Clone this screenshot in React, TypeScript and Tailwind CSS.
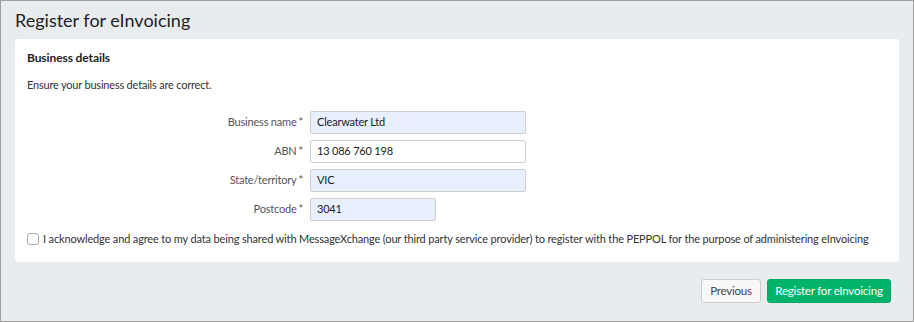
import React from "react";

const font = { fontFamily: 'Lato, "Noto Sans", sans-serif' };

function Row({ label, value, w, filled }: { label: string; value: string; w: string; filled: boolean }) {
  return (
    <div className="flex items-center h-[23px]">
      <div className="w-[283px] pr-[7px] text-right text-[11px] tracking-[-0.2px] text-[#555]">
        {label}
        <span className="ml-[2px]">*</span>
      </div>
      <div
        className={`${w} h-[23px] border border-[#cfcfcf] rounded-[2px] flex items-center pl-[6px] text-[11px] tracking-[-0.2px] text-[#222] ${
          filled ? "bg-[#e8f0fe]" : "bg-white"
        }`}
      >
        {value}
      </div>
    </div>
  );
}

export default function App() {
  return (
    <div
      className="w-[914px] h-[322px] border border-[#a0a0a0] bg-[#e9ecef] flex flex-col overflow-hidden"
      style={font}
    >
      <div className="h-[38px] pl-[14px] pt-[7px] text-[18px] text-[#222] leading-[24px]">Register for eInvoicing</div>
      <div className="mx-[14px] bg-white rounded-[3px] px-[12px] pt-[10px] h-[223px]">
        <div className="text-[12px] font-bold tracking-[-0.1px] text-[#222] leading-[18px]">Business details</div>
        <div className="mt-[9px] text-[11px] tracking-[-0.2px] text-[#333] leading-[18px]">
          Ensure your business details are correct.
        </div>
        <div className="mt-[17px] flex flex-col gap-[6px]">
          <Row label="Business name" value="Clearwater Ltd" w="w-[216px]" filled />
          <Row label="ABN" value="13 086 760 198" w="w-[216px]" filled={false} />
          <Row label="State/territory" value="VIC" w="w-[216px]" filled />
          <Row label="Postcode" value="3041" w="w-[126px]" filled />
        </div>
        <div className="mt-[10px] flex items-center gap-[4px] text-[11px] tracking-[-0.15px] text-[#333]">
          <span className="w-[12px] h-[12px] border border-[#aaa] rounded-[3px] bg-white" />
          <span className="whitespace-nowrap">
            I acknowledge and agree to my data being shared with MessageXchange (our third party service provider) to
            register with the PEPPOL for the purpose of administering eInvoicing
          </span>
        </div>
      </div>
      <div className="mt-[17px] mr-[22px] flex justify-end gap-[6px]">
        <button className="h-[24px] w-[60px] border border-[#ccc] rounded-[3px] bg-[#f8f8f8] text-[11.5px] tracking-[-0.2px] text-[#444]">
          Previous
        </button>
        <button className="h-[24px] w-[124px] border border-[#00a862] rounded-[3px] bg-[#00b36b] text-[11.5px] tracking-[-0.2px] text-white">
          Register for eInvoicing
        </button>
      </div>
    </div>
  );
}
